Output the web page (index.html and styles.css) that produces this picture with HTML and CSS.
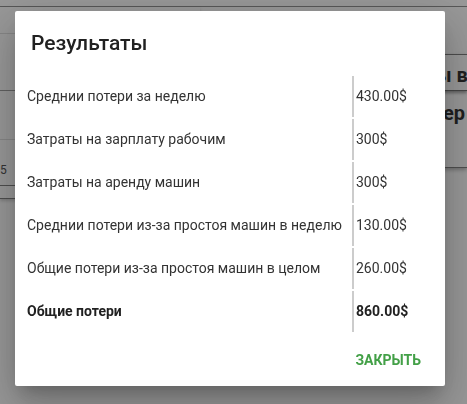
FILE: index.html
```html
<!DOCTYPE html>
<html lang="ru">
<head>
<meta charset="utf-8">
<meta name="viewport" content="width=device-width, initial-scale=1">
<title>Результаты</title>
<link rel="stylesheet" href="styles.css">
</head>
<body>
<main class="page">
  <div class="topbar"></div>
  <div class="content">
    <section class="chart">
      <div class="band band-first"></div>
      <div class="band band-major"></div>
      <div class="band"></div>
      <div class="axis">5</div>
      <div class="chart-foot"></div>
    </section>
    <section class="side">
      <div class="side-head">ы в</div>
      <div class="side-body">ер</div>
    </section>
  </div>
</main>
<div class="overlay">
  <div class="dialog" role="dialog" aria-modal="true" aria-labelledby="dialog-title">
    <h2 class="dialog-title" id="dialog-title">Результаты</h2>
    <table class="results">
      <tbody>
        <tr><th scope="row">Среднии потери за неделю</th><td>430.00$</td></tr>
        <tr><th scope="row">Затраты на зарплату рабочим</th><td>300$</td></tr>
        <tr><th scope="row">Затраты на аренду машин</th><td>300$</td></tr>
        <tr><th scope="row">Среднии потери из-за простоя машин в неделю</th><td>130.00$</td></tr>
        <tr><th scope="row">Общие потери из-за простоя машин в целом</th><td>260.00$</td></tr>
        <tr class="total"><th scope="row">Общие потери</th><td>860.00$</td></tr>
      </tbody>
    </table>
    <div class="actions"><button class="close" type="button">Закрыть</button></div>
  </div>
</div>
</body>
</html>
```
FILE: styles.css
```css
* {
  box-sizing: border-box;
}

body {
  margin: 0;
  min-height: 100vh;
  overflow: hidden;
  background: #fff;
  color: #212121;
  font-family: Roboto, "Liberation Sans", sans-serif;
  font-size: 14px;
}

.topbar {
  height: 7px;
  border-bottom: 1px solid #888;
}

.content {
  display: flex;
  align-items: flex-start;
  justify-content: space-between;
}

.chart {
  flex: 0 1 200px;
  border-bottom: 1px solid #777;
  box-shadow: 0 2px 3px rgba(0, 0, 0, 0.2);
}

.band {
  height: 49px;
  border-bottom: 1px solid #ddd;
}

.band-first {
  height: 27px;
}

.band-major {
  height: 57px;
  border-bottom-color: #999;
}

.axis {
  height: 46px;
  padding-top: 22px;
  border-bottom: 1px solid #777;
  font-size: 12px;
  line-height: 16px;
  color: #444;
}

.chart-foot {
  height: 12px;
}

.side {
  flex: 0 0 48px;
  min-width: 0;
  margin-top: 47px;
  border-top: 1px solid #777;
  border-bottom: 1px solid #777;
  box-shadow: 0 2px 4px rgba(0, 0, 0, 0.3);
  white-space: nowrap;
  font-weight: 700;
}

.side-head {
  height: 36px;
  padding: 8px 0 8px 16px;
  border-bottom: 1px solid #666;
  box-shadow: 0 2px 3px rgba(0, 0, 0, 0.4);
  font-size: 20px;
  line-height: 24px;
}

.side-body {
  height: 76px;
  padding: 8px 0 8px 24px;
  font-size: 20px;
  line-height: 28px;
}

.overlay {
  position: fixed;
  inset: 0;
  display: flex;
  align-items: flex-start;
  padding: 11px 22px 18px 15px;
  background: rgba(33, 33, 33, 0.46);
}

.dialog {
  flex: 1;
  padding: 16px 8px 8px;
  border-radius: 2px;
  background: #fff;
  box-shadow:
    0 11px 15px -7px rgba(0, 0, 0, 0.2),
    0 24px 38px 3px rgba(0, 0, 0, 0.14),
    0 9px 46px 8px rgba(0, 0, 0, 0.12);
}

.dialog-title {
  margin: 0 8px 15px;
  font-size: 21px;
  font-weight: 500;
  line-height: 32px;
}

.results {
  width: 100%;
  border-spacing: 2px;
}

.results th,
.results td {
  height: 41px;
  padding: 0 2px 2px;
  color: #333;
  font-weight: 400;
  text-align: left;
  white-space: nowrap;
}

.results td {
  width: 83px;
  border-left: 2px solid #ccc;
}

.results .total th,
.results .total td {
  color: #212121;
  font-weight: 700;
}

.actions {
  display: flex;
  justify-content: flex-end;
  padding-top: 8px;
}

.close {
  height: 36px;
  padding: 0 16px;
  border: 0;
  background: transparent;
  color: #43a047;
  font: inherit;
  font-weight: 700;
  text-transform: uppercase;
}
```
